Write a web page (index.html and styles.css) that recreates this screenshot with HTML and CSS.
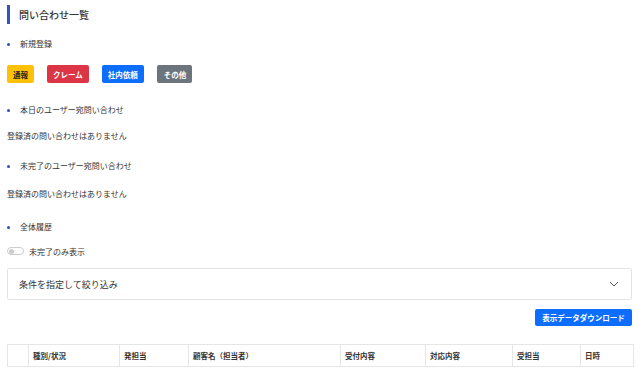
FILE: index.html
```html
<!DOCTYPE html>
<html lang="ja">

<head>
    <meta charset="UTF-8">
    <meta name="viewport" content="width=device-width, initial-scale=1.0">
    <title>問い合わせ一覧</title>
    <link rel="stylesheet" href="styles.css">
</head>

<body>
    <h1 class="page-title">問い合わせ一覧</h1>

    <div class="sec sec-new">新規登録</div>
    <div class="btn-row">
        <button class="btn btn-yellow">通報</button>
        <button class="btn btn-red">クレーム</button>
        <button class="btn btn-blue">社内依頼</button>
        <button class="btn btn-gray">その他</button>
    </div>

    <div class="sec sec-today">本日のユーザー宛問い合わせ</div>
    <p class="empty">登録済の問い合わせはありません</p>

    <div class="sec sec-open">未完了のユーザー宛問い合わせ</div>
    <p class="empty empty-open">登録済の問い合わせはありません</p>

    <div class="sec sec-all">全体履歴</div>
    <label class="toggle">
        <span class="switch"><span class="knob"></span></span>
        未完了のみ表示
    </label>

    <div class="accordion">
        <span>条件を指定して絞り込み</span>
        <svg width="10" height="6" viewBox="0 0 10 6">
            <path d="M1 1 L5 5 L9 1" fill="none" stroke="#444" stroke-width="0.9" />
        </svg>
    </div>

    <div class="dl-row">
        <button class="btn-dl">表示データダウンロード</button>
    </div>

    <table class="list">
        <colgroup>
            <col style="width: 21px">
            <col style="width: 91px">
            <col style="width: 69px">
            <col style="width: 152px">
            <col style="width: 85px">
            <col style="width: 87px">
            <col style="width: 68px">
            <col style="width: 53px">
        </colgroup>
        <thead>
            <tr>
                <th></th>
                <th>種別/状況</th>
                <th>発担当</th>
                <th>顧客名（担当者）</th>
                <th>受付内容</th>
                <th>対応内容</th>
                <th>受担当</th>
                <th>日時</th>
            </tr>
        </thead>
    </table>
</body>

</html>
```

FILE: styles.css
```css
html {
    background-color: #fff;
}

body {
    margin: 0;
    padding: 5px 7px 0 7px;
    font-family: "Noto Sans CJK JP", "Noto Sans", sans-serif;
    font-size: 8px;
    color: #333;
}

.page-title {
    margin: 0;
    height: 19px;
    line-height: 19px;
    border-left: 3px solid #3153c4;
    padding-left: 9px;
    font-size: 10px;
    font-weight: 500;
    color: #333;
}

.sec {
    height: 12px;
    line-height: 12px;
    padding-left: 13px;
    position: relative;
}

.sec::before {
    content: "";
    position: absolute;
    left: 0;
    top: 5px;
    width: 3px;
    height: 3px;
    border-radius: 50%;
    background-color: #2f4fb8;
}

.sec-new {
    margin-top: 14px;
}

.sec-today {
    margin-top: 21px;
}

.sec-open {
    margin-top: 18px;
}

.sec-all {
    margin-top: 21px;
}

.btn-row {
    display: flex;
    gap: 13px;
    margin-top: 15px;
}

.btn {
    height: 18px;
    padding: 0 6px;
    border: none;
    border-radius: 2px;
    font-family: inherit;
    font-size: 7.5px;
    font-weight: 700;
    color: #fff;
}

.btn-yellow {
    background-color: #ffc107;
    color: #222;
}

.btn-red {
    background-color: #dc3545;
}

.btn-blue {
    background-color: #0d6efd;
}

.btn-gray {
    background-color: #6c757d;
    padding: 0 6px 0 7px;
}

.empty {
    margin: 14px 0 0 0;
    height: 12px;
    line-height: 12px;
}

.empty-open {
    margin-top: 16px;
}

.toggle {
    display: flex;
    align-items: center;
    gap: 5px;
    height: 12px;
    margin-top: 12px;
}

.switch {
    width: 14px;
    height: 6px;
    border: 1px solid #ccc;
    border-radius: 4px;
    display: flex;
    align-items: center;
    padding-left: 1px;
}

.knob {
    width: 5px;
    height: 5px;
    border-radius: 50%;
    background-color: #ccc;
}

.accordion {
    margin-top: 11px;
    height: 30px;
    border: 1px solid #e3e3e3;
    border-radius: 2px;
    display: flex;
    align-items: center;
    justify-content: space-between;
    padding: 0 12px 0 11px;
    font-size: 9px;
}

.dl-row {
    display: flex;
    justify-content: flex-end;
    margin-top: 9px;
}

.btn-dl {
    height: 17px;
    width: 97px;
    padding: 0;
    border: none;
    border-radius: 2px;
    background-color: #0d6efd;
    color: #fff;
    font-family: inherit;
    font-size: 7.5px;
    font-weight: 700;
}

.list {
    margin-top: 18px;
    width: 626px;
    border-collapse: collapse;
    table-layout: fixed;
}

.list th {
    height: 21px;
    border: 1px solid #e6e6e6;
    text-align: left;
    padding: 0 0 0 4px;
    font-size: 7.5px;
    font-weight: 700;
    color: #333;
}
```
